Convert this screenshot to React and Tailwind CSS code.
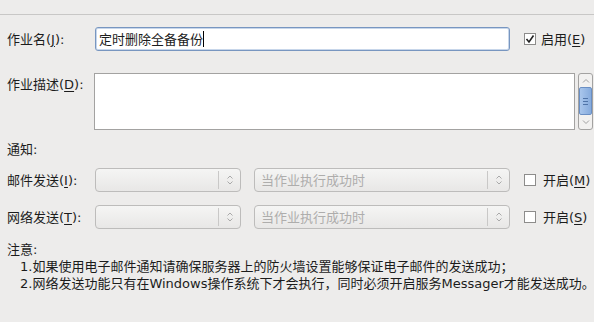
const font = {
  fontFamily: '"DejaVu Sans", "Noto Sans CJK SC", sans-serif',
};

function Mn({ children }) {
  return <span className="underline underline-offset-2">{children}</span>;
}

function UpDown({ className = "" }) {
  return (
    <svg width="8" height="12" viewBox="0 0 8 12" className={className}>
      <path d="M1.5 4.5 L4 2 L6.5 4.5" fill="none" stroke="#a9a9a9" strokeWidth="1" />
      <path d="M1.5 7.5 L4 10 L6.5 7.5" fill="none" stroke="#a9a9a9" strokeWidth="1" />
    </svg>
  );
}

function Combo({ width, text }) {
  return (
    <div
      className={`${width} h-[24px] flex items-center rounded-[4px] border border-[#bdbcbb] bg-gradient-to-b from-[#f5f5f4] to-[#e8e7e6]`}
    >
      <div className="flex-1 pl-[6px] text-[13px] text-[#aeadac] whitespace-nowrap overflow-hidden">
        {text}
      </div>
      <div className="w-px h-[18px] bg-[#c9c8c7]" />
      <div className="w-[21px] flex justify-center">
        <UpDown />
      </div>
    </div>
  );
}

function CheckBox({ checked }) {
  return (
    <div className="w-[12px] h-[12px] border border-[#8d8c8b] bg-white flex items-center justify-center">
      {checked && (
        <svg width="10" height="10" viewBox="0 0 10 10">
          <path d="M1.5 5 L4 8 L8.5 1.5" fill="none" stroke="#222" strokeWidth="1.6" />
        </svg>
      )}
    </div>
  );
}

export default function App() {
  return (
    <div
      className="w-[594px] h-[322px] bg-[#edeceb] text-[#1c1c1c] text-[13px] leading-[17px] overflow-hidden"
      style={font}
    >
      {/* top separator */}
      <div className="h-[15px] border-b border-[#c8c7c6]" />

      {/* name */}
      <div className="flex items-center mt-[12px] pl-[7px]">
        <div className="w-[88px]">
          作业名(<Mn>J</Mn>):
        </div>
        <div className="w-[415px] h-[24px] rounded-[3px] border border-[#7896c0] bg-white flex items-center pl-[3px] shadow-[inset_0_0_0_1px_#c7d6ea]">
          <span>定时删除全备备份</span>
          <span className="w-px h-[16px] bg-black" />
        </div>
        <div className="ml-[14px]">
          <CheckBox checked />
        </div>
        <div className="ml-[5px]">
          启用(<Mn>E</Mn>)
        </div>
      </div>

      {/* description */}
      <div className="flex mt-[22px] pl-[7px]">
        <div className="w-[87px] pt-[3px]">
          作业描述(<Mn>D</Mn>):
        </div>
        <div className="w-[481px] h-[57px] border border-[#a3a2a1] bg-white" />
        <div className="ml-[3px] w-[15px] h-[57px] rounded-[3px] border border-[#a3a2a1] bg-[#f2f1f0] flex flex-col overflow-hidden">
          <div className="h-[13px] flex items-center justify-center">
            <svg width="8" height="6" viewBox="0 0 8 6">
              <path d="M1 4.5 L4 1.5 L7 4.5" fill="none" stroke="#a0a0a0" />
            </svg>
          </div>
          <div className="flex-1 rounded-[2px] border border-[#6a8fc4] bg-gradient-to-r from-[#a9c6ec] to-[#86abdd] flex flex-col items-center justify-center gap-[2px]">
            <div className="w-[5px] h-px bg-[#4f74a8]" />
            <div className="w-[5px] h-px bg-[#4f74a8]" />
            <div className="w-[5px] h-px bg-[#4f74a8]" />
          </div>
          <div className="h-[14px] flex items-center justify-center">
            <svg width="8" height="6" viewBox="0 0 8 6">
              <path d="M1 1.5 L4 4.5 L7 1.5" fill="none" stroke="#a0a0a0" />
            </svg>
          </div>
        </div>
      </div>

      {/* notify */}
      <div className="mt-[11px] pl-[7px]">通知:</div>

      <div className="flex items-center mt-[10px] pl-[7px]">
        <div className="w-[88px]">
          邮件发送(<Mn>I</Mn>):
        </div>
        <Combo width="w-[146px]" />
        <div className="ml-[13px]">
          <Combo width="w-[256px]" text="当作业执行成功时" />
        </div>
        <div className="ml-[14px]">
          <CheckBox />
        </div>
        <div className="ml-[7px]">
          开启(<Mn>M</Mn>)
        </div>
      </div>

      <div className="flex items-center mt-[13px] pl-[7px]">
        <div className="w-[88px]">
          网络发送(<Mn>T</Mn>):
        </div>
        <Combo width="w-[146px]" />
        <div className="ml-[13px]">
          <Combo width="w-[256px]" text="当作业执行成功时" />
        </div>
        <div className="ml-[14px]">
          <CheckBox />
        </div>
        <div className="ml-[7px]">
          开启(<Mn>S</Mn>)
        </div>
      </div>

      {/* notes */}
      <div className="mt-[12px] pl-[7px]">注意:</div>
      <div className="pl-[20px] whitespace-nowrap">
        1.如果使用电子邮件通知请确保服务器上的防火墙设置能够保证电子邮件的发送成功；
      </div>
      <div className="pl-[20px] whitespace-nowrap">
        2.网络发送功能只有在Windows操作系统下才会执行，同时必须开启服务Messager才能发送成功。
      </div>
    </div>
  );
}
